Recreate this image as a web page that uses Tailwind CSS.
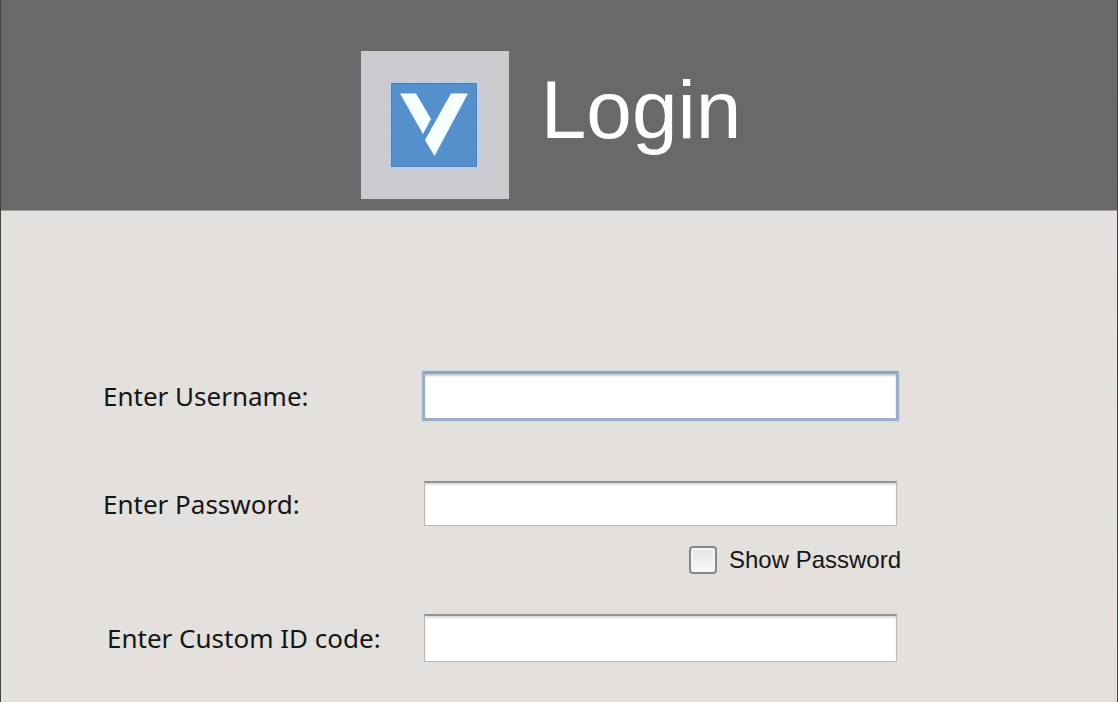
<!DOCTYPE html>
<html lang="en">
<head>
<meta charset="utf-8">
<meta name="viewport" content="width=device-width, initial-scale=1">
<title>Login</title>
<script src="https://cdn.jsdelivr.net/npm/@tailwindcss/browser@4"></script>
</head>
<body class="min-h-screen bg-[#e3e0dd] font-['Noto_Sans',sans-serif] text-[#151515]">
<div class="flex min-h-screen">
  <div class="w-px shrink-0 bg-[#45434a]"></div>
  <div class="min-w-0 grow">
    <header class="flex items-start justify-center gap-8 border-b border-[#a3a2a1] bg-[#696969] pt-[51px] pr-4 pb-[11px]">
      <svg class="size-[148px] shrink-0" viewBox="0 0 148 148" role="img" aria-label="V logo">
        <rect width="148" height="148" fill="#cbcace"/>
        <rect x="28" y="30" width="90" height="88" rx="2" fill="#b9cfea"/>
        <rect x="30" y="32" width="86" height="84" fill="#5590cd"/>
        <rect x="30.500" y="32.500" width="85" height="83" fill="none" stroke="#4779ac" stroke-dasharray="2 1"/>
        <path d="M39 42.500H55L70 68L62 83Z" fill="#f5ffff"/>
        <path d="M90 42.500H107L73.500 105L64 89Z" fill="#f5ffff"/>
      </svg>
      <h1 class="pt-3.5 font-['Liberation_Sans',sans-serif] text-[82px] leading-[90px] text-white">Login</h1>
    </header>
    <form class="grid grid-cols-[321px_minmax(0,1fr)] items-center pt-[160px] pr-[220px] pl-[102px] text-[26px] leading-9">
      <label for="username">Enter Username:</label>
      <input id="username" type="text" class="-mx-0.5 h-[50px] rounded-xs border-3 border-[#9aafc7] border-t-[#8fa5bd] bg-white px-2 shadow-[0_0_2px_#a9c4e8,inset_0_2px_2px_#cfcfcf] outline-none">

      <label for="password" class="mt-15">Enter Password:</label>
      <input id="password" type="password" class="mt-15 h-[45px] border border-t-2 border-[#b9b7b5] border-t-[#929090] bg-white px-2 shadow-[inset_0_2px_2px_#dddddd] outline-none">

      <label class="col-start-2 -mr-1 mt-4 flex items-center gap-3 justify-self-end font-['Liberation_Sans',sans-serif] text-[24px]">
        <input type="checkbox" class="size-7 appearance-none rounded-sm border-2 border-[#858689] bg-linear-to-b from-[#e2e3e6] to-[#fafafa] shadow-[inset_0_0_0_2px_#f6f6f6]">
        Show Password
      </label>

      <label for="code" class="mt-9 pl-1">Enter Custom ID code:</label>
      <input id="code" type="text" class="mt-9 h-12 border border-t-2 border-[#b9b7b5] border-t-[#929090] bg-white px-2 shadow-[inset_0_2px_2px_#dddddd] outline-none">
    </form>
  </div>
  <div class="w-px shrink-0 bg-linear-to-b from-[#55404a] via-[#55303a] to-[#8a2b33]"></div>
</div>
</body>
</html>
